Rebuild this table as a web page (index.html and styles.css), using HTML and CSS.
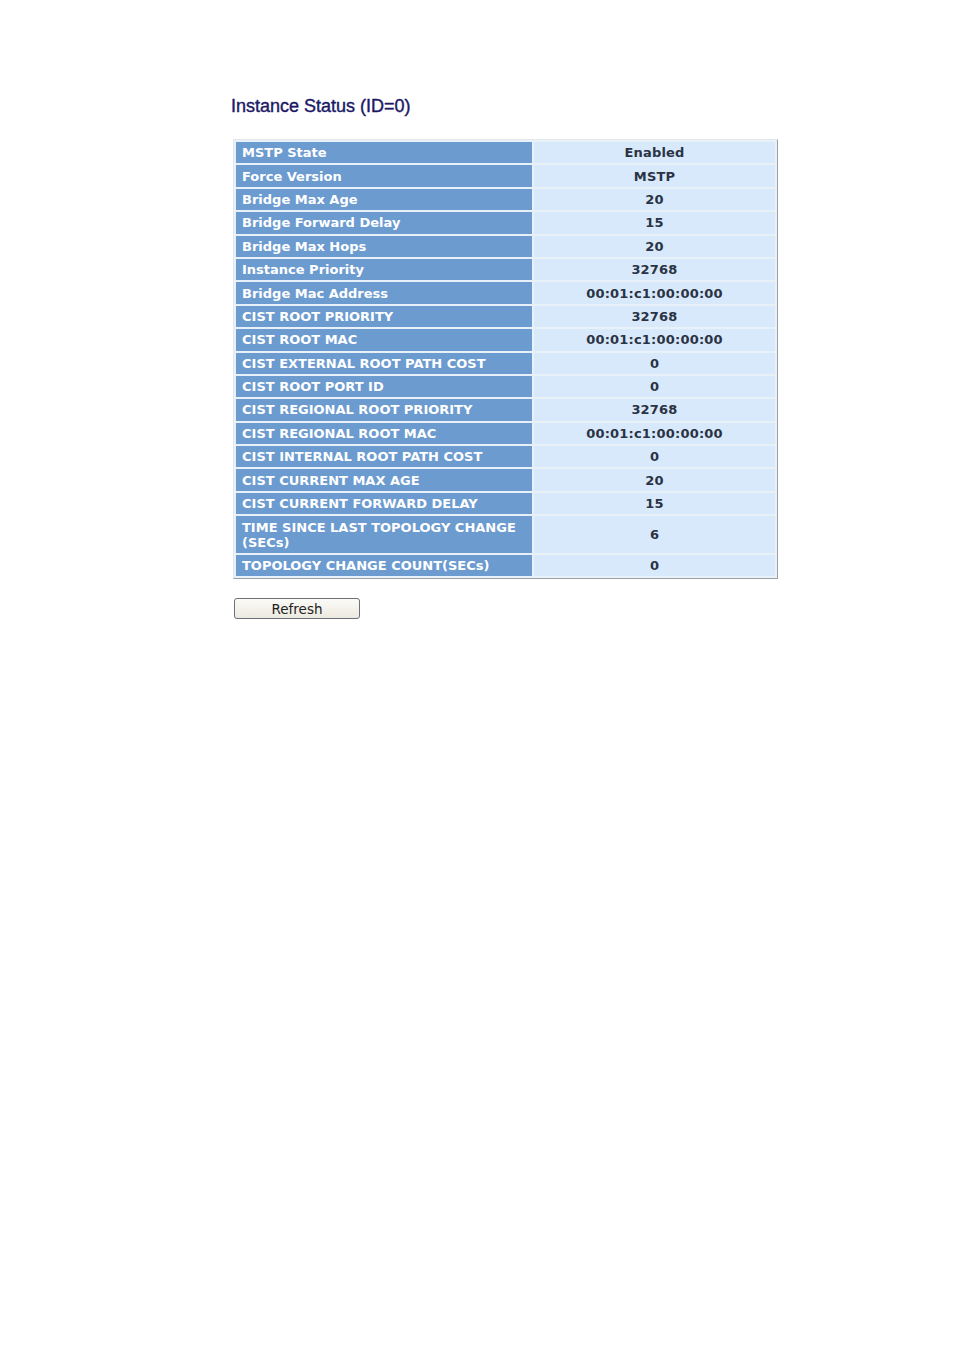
FILE: index.html
```html
<!DOCTYPE html>
<html>
<head>
<meta charset="utf-8">
<link rel="stylesheet" href="styles.css">
</head>
<body>
<div class="page">
  <h1 class="title">Instance Status (ID=0)</h1>
  <table class="status">
    <tr><th>MSTP State</th><td>Enabled</td></tr>
    <tr><th>Force Version</th><td>MSTP</td></tr>
    <tr><th>Bridge Max Age</th><td>20</td></tr>
    <tr><th>Bridge Forward Delay</th><td>15</td></tr>
    <tr><th>Bridge Max Hops</th><td>20</td></tr>
    <tr><th>Instance Priority</th><td>32768</td></tr>
    <tr><th>Bridge Mac Address</th><td>00:01:c1:00:00:00</td></tr>
    <tr><th>CIST ROOT PRIORITY</th><td>32768</td></tr>
    <tr><th>CIST ROOT MAC</th><td>00:01:c1:00:00:00</td></tr>
    <tr><th>CIST EXTERNAL ROOT PATH COST</th><td>0</td></tr>
    <tr><th>CIST ROOT PORT ID</th><td>0</td></tr>
    <tr><th>CIST REGIONAL ROOT PRIORITY</th><td>32768</td></tr>
    <tr><th>CIST REGIONAL ROOT MAC</th><td>00:01:c1:00:00:00</td></tr>
    <tr><th>CIST INTERNAL ROOT PATH COST</th><td>0</td></tr>
    <tr><th>CIST CURRENT MAX AGE</th><td>20</td></tr>
    <tr><th>CIST CURRENT FORWARD DELAY</th><td>15</td></tr>
    <tr class="tall"><th>TIME SINCE LAST TOPOLOGY CHANGE (SECs)</th><td>6</td></tr>
    <tr><th>TOPOLOGY CHANGE COUNT(SECs)</th><td>0</td></tr>
  </table>
  <button class="refresh" type="button">Refresh</button>
</div>
</body>
</html>
```

FILE: styles.css
```css
html, body {
  margin: 0;
  padding: 0;
  background: #ffffff;
}

.page {
  padding: 96px 0 0 231px;
}

.title {
  margin: 0 0 22px 0;
  font-family: "Liberation Sans", Arial, sans-serif;
  font-size: 18px;
  font-weight: normal;
  color: #1c1866;
  line-height: 21px;
  -webkit-text-stroke: 0.4px #1c1866;
}

.status {
  margin-left: 2px;
  width: 545px;
  border-collapse: separate;
  border-spacing: 2px;
  border: 1px solid;
  border-color: #e4e8ec #9aa0a6 #9aa0a6 #e4e8ec;
  background: #e9f1f8;
  font-family: "DejaVu Sans", Verdana, sans-serif;
  font-size: 13px;
  font-weight: bold;
}

.status th {
  width: 286px;
  height: 21.4px;
  padding: 0 4px 0 6px;
  background: #6c9bd0;
  color: #ffffff;
  text-align: left;
  line-height: 15px;
}

.status td {
  height: 21.4px;
  padding: 0;
  background: #d8e9fb;
  color: #2a3344;
  text-align: center;
  line-height: 15px;
  letter-spacing: 0.2px;
}

.status .tall th,
.status .tall td {
  height: 36.6px;
}

.refresh {
  display: block;
  margin: 19px 0 0 3px;
  width: 126px;
  height: 21px;
  padding: 0;
  font-family: "DejaVu Sans", Verdana, sans-serif;
  font-size: 13.5px;
  color: #222222;
  background: linear-gradient(#fbfbf8, #ece9df);
  border: 1px solid #6b7079;
  border-radius: 3px;
}
```
